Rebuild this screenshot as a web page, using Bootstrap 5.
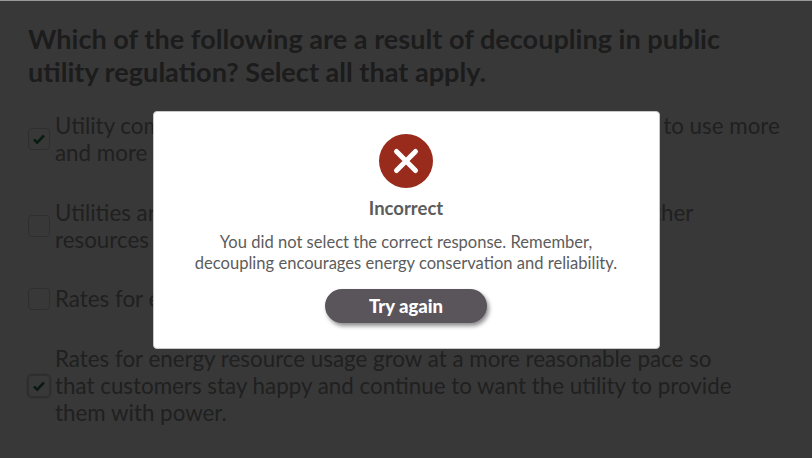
<!DOCTYPE html>
<html lang="en">
<head>
<meta charset="utf-8">
<title>Question</title>
<link href="https://cdn.jsdelivr.net/npm/bootstrap@5.3.0/dist/css/bootstrap.min.css" rel="stylesheet">
<style>
html,body{height:458px;overflow:hidden}
body{font-family:Lato,"Liberation Sans",sans-serif;background:#fff;color:#555;}
.quiz-wrap{padding:22px 28px 0;height:458px}
.quiz-q{font-size:27.1px;line-height:33px;font-weight:700;color:#828282;margin:0 0 24px;white-space:nowrap}
.quiz-opt{display:flex;align-items:center;gap:5px;font-size:22.37px;line-height:27px;color:#909090;margin-bottom:32.7px;white-space:nowrap}
.quiz-box{flex:none;width:22px;height:22px;border:1.5px solid #d0d0d0;border-radius:4px;display:flex;align-items:center;justify-content:center}
.quiz-box.is-focus{box-shadow:0 0 0 1.5px #d0d0d0}
.quiz-tight{letter-spacing:-.1px}
.veil{position:fixed;inset:0;background:rgba(0,0,0,.78);z-index:10;border-top:1px solid #999}
.dlg{position:fixed;left:153px;top:111px;width:507px;height:238px;background:#fff;border:1px solid #c8c8c8;border-radius:4px;z-index:20;padding:22px 31px 0 30px;text-align:center;color:#5c5c5c}
.dlg-icon{display:block;margin:0 auto 9px;width:54px;height:54px}
.dlg-title{font-size:18.5px;line-height:22px;font-weight:700;margin:0 0 13px;color:#5c5c5c}
.dlg-text{font-size:16.56px;line-height:21px;margin:0 0 15px;color:#5c5c5c}
.dlg-btn{width:162px;height:34px;padding:1px 0 0;border:0;border-radius:17px;background:#5a555b;color:#fff;font-weight:900;font-size:18.5px;box-shadow:2px 3px 4px rgba(0,0,0,.45)}
.dlg-btn:hover{background:#5a555b;color:#fff}
</style>
</head>
<body>
<main class="quiz-wrap">
  <h1 class="quiz-q">Which of the following are a result of decoupling in public<br>utility regulation? Select all that apply.</h1>
  <div class="quiz-opt"><span class="quiz-box"><svg width="14" height="12" viewBox="0 0 14 12"><path d="M2 6.500 5.200 9.600 12 2.500" fill="none" stroke="#2a7a52" stroke-width="2.600"/></svg></span><span>Utility companies lose incentive to encourage their customers to use more<br>and more energy in order to increase their profits.</span></div>
  <div class="quiz-opt"><span class="quiz-box"></span><span>Utilities are <span class="quiz-tight">encouraged to invest in energy efficiency and in ot</span>her<br>resources that reduce total energy usage by their customers.</span></div>
  <div class="quiz-opt"><span class="quiz-box"></span><span>Rates for energy always go down for customers.</span></div>
  <div class="quiz-opt"><span class="quiz-box is-focus"><svg width="14" height="12" viewBox="0 0 14 12"><path d="M2 6.500 5.200 9.600 12 2.500" fill="none" stroke="#2a7a52" stroke-width="2.600"/></svg></span><span>Rates for energy resource usage grow at a more reasonable pace so<br>that customers stay happy and continue to want the utility to provide<br>them with power.</span></div>
</main>
<div class="veil"></div>
<div class="dlg" role="dialog">
  <svg class="dlg-icon" viewBox="0 0 54 54"><circle cx="27" cy="27" r="27" fill="#982b1c"/><path d="M17.500 17.500 36.500 36.500M36.500 17.500 17.500 36.500" stroke="#fff" stroke-width="5" stroke-linecap="round"/></svg>
  <h2 class="dlg-title">Incorrect</h2>
  <p class="dlg-text">You did not select the correct response. Remember,<br>decoupling encourages energy conservation and reliability.</p>
  <button type="button" class="btn dlg-btn">Try again</button>
</div>
<script src="https://cdn.jsdelivr.net/npm/bootstrap@5.3.0/dist/js/bootstrap.bundle.min.js"></script>
</body>
</html>
